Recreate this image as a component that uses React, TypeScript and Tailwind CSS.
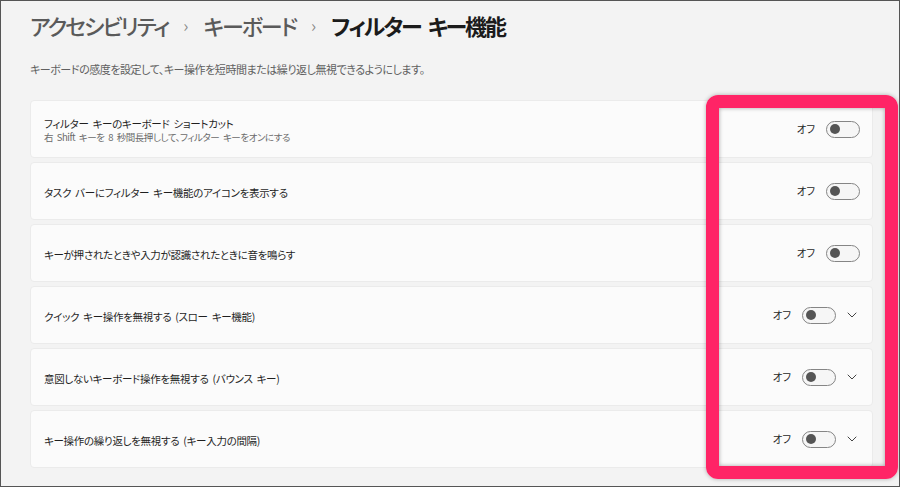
import { ChevronDown } from "lucide-react";

const rows = [
  { title: "フィルター キーのキーボード ショートカット", sub: "右 Shift キーを 8 秒間長押しして、フィルター キーをオンにする", expand: false },
  { title: "タスク バーにフィルター キー機能のアイコンを表示する", expand: false },
  { title: "キーが押されたときや入力が認識されたときに音を鳴らす", expand: false },
  { title: "クイック キー操作を無視する (スロー キー機能)", expand: true },
  { title: "意図しないキーボード操作を無視する (バウンス キー)", expand: true },
  { title: "キー操作の繰り返しを無視する (キー入力の間隔)", expand: true },
];

function Toggle() {
  return (
    <div className="w-[34px] h-[17px] rounded-full border border-[#858585] bg-[#f6f6f6] flex items-center pl-[3px]">
      <div className="size-[10px] rounded-full bg-[#555]" />
    </div>
  );
}

function Row({ title, sub, expand }: { title: string; sub?: string; expand: boolean }) {
  return (
    <div className="h-[58px] rounded-[4px] bg-[#fbfbfb] border border-[#ebebeb] flex items-center pl-[13px] pr-[12px]">
      <div className="flex-1 flex flex-col pt-[2px] [word-spacing:2px]">
        <span className="text-[10.5px] leading-[15px] tracking-[-0.3px] text-[#1f1f1f]">{title}</span>
        {sub && (
          <span className="text-[9.5px] leading-[13px] tracking-[-0.45px] text-[#6a6a6a]">{sub}</span>
        )}
      </div>
      <div className="flex items-center">
        <span className="text-[10.5px] text-[#1f1f1f] mr-[11px]">オフ</span>
        <Toggle />
        {expand && <ChevronDown className="size-[16px] ml-[8px] text-[#444]" strokeWidth={1.5} />}
      </div>
    </div>
  );
}

export default function App() {
  return (
    <div className="relative w-[900px] h-[487px] overflow-hidden border border-[#555] bg-[#f3f3f3] [font-family:'Noto_Sans_CJK_JP','Noto_Sans',sans-serif] [font-feature-settings:'palt']">
      <div className="pl-[29px] pr-[26px] pt-[7px]">
        <h1 className="flex items-center h-[34px] text-[22px] tracking-[-2px] [word-spacing:4px]">
          <span className="text-[#5a5a5a] font-medium">アクセシビリティ</span>
          <span className="text-[#8a8a8a] text-[17px] mx-[15px] tracking-normal">›</span>
          <span className="text-[#5a5a5a] font-medium">キーボード</span>
          <span className="text-[#8a8a8a] text-[17px] mx-[15px] tracking-normal">›</span>
          <span className="text-[#1b1b1b] font-semibold">フィルター キー機能</span>
        </h1>
        <p className="mt-[19px] text-[11px] leading-[16px] tracking-[-0.45px] text-[#606060]">
          キーボードの感度を設定して、キー操作を短時間または繰り返し無視できるようにします。
        </p>
        <div className="mt-[23px] flex flex-col gap-[4px]">
          {rows.map((r) => (
            <Row key={r.title} {...r} />
          ))}
        </div>
      </div>
      <div className="absolute left-[705px] top-[94px] w-[192px] h-[384px] rounded-[12px] border-[13px] border-[#ff2466] shadow-[0_0_4px_rgba(0,0,0,0.3),inset_0_0_4px_rgba(0,0,0,0.35)]" />
    </div>
  );
}
